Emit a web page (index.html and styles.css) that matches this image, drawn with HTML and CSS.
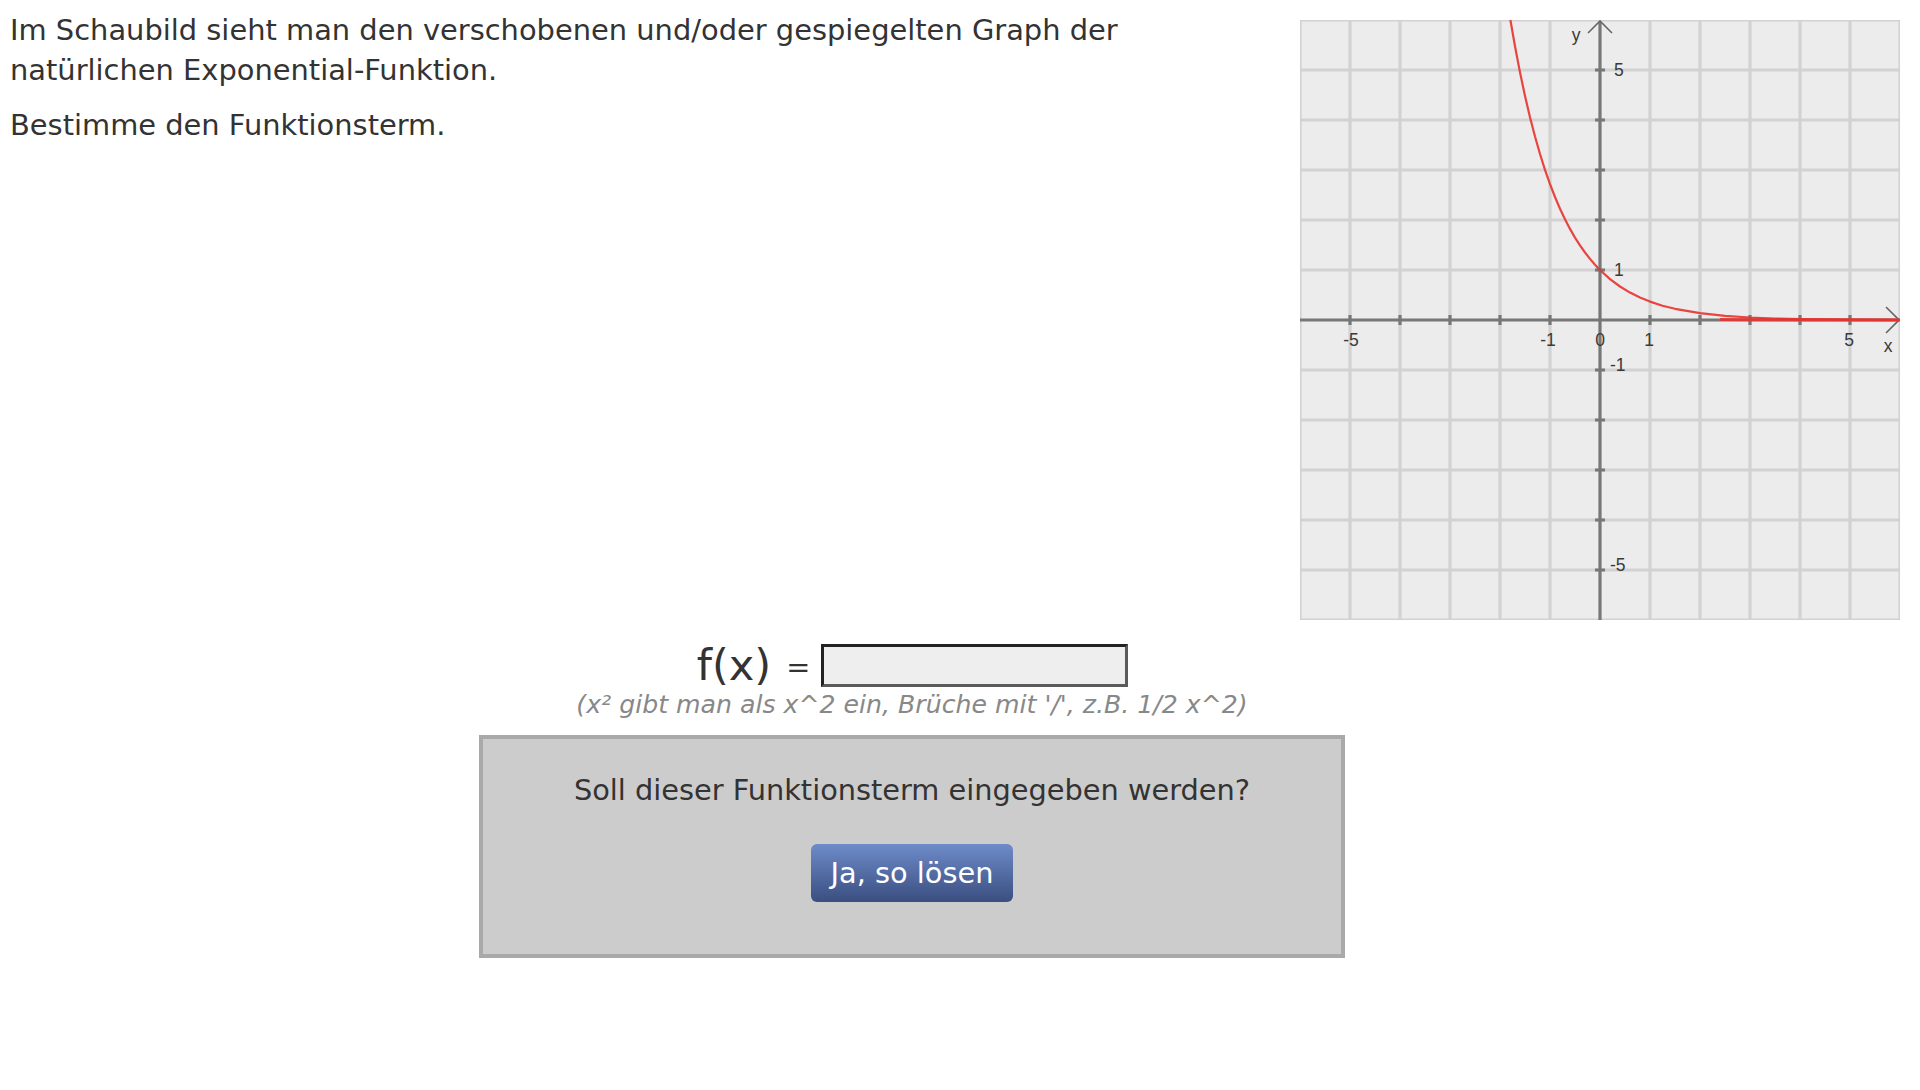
FILE: index.html
```html
<!DOCTYPE html>
<html lang="de">
<head>
<meta charset="utf-8">
<title>Exponential-Funktion</title>
<link rel="stylesheet" href="styles.css">
</head>
<body>
<div class="top">
  <div class="task">
    <p>Im Schaubild sieht man den verschobenen und/oder gespiegelten Graph der natürlichen Exponential-Funktion.</p>
    <p>Bestimme den Funktionsterm.</p>
  </div>
  <svg class="graph" viewBox="0 0 600 600" xmlns="http://www.w3.org/2000/svg">
    <rect x="0" y="0" width="600" height="600" fill="#ececec"/>
    <g stroke="#d2d2d2" stroke-width="3.2">
      <path d="M0 0V600M50 0V600M100 0V600M150 0V600M200 0V600M250 0V600M350 0V600M400 0V600M450 0V600M500 0V600M550 0V600M600 0V600"/>
      <path d="M0 0H600M0 50H600M0 100H600M0 150H600M0 200H600M0 250H600M0 350H600M0 400H600M0 450H600M0 500H600M0 550H600M0 600H600"/>
    </g>
    <g stroke="#777" stroke-width="3.2">
      <path d="M0 300H598"/>
      <path d="M300 2V600"/>
      <path d="M50 295V305M100 295V305M150 295V305M200 295V305M250 295V305M350 295V305M400 295V305M450 295V305M500 295V305M550 295V305"/>
      <path d="M295 50H305M295 100H305M295 150H305M295 200H305M295 250H305M295 350H305M295 400H305M295 450H305M295 500H305M295 550H305"/>
    </g>
    <g fill="none" stroke="#666" stroke-width="1.6">
      <path d="M288 13L300 1L312 13"/>
      <path d="M586 287L599 300L586 313"/>
    </g>
    <path fill="none" stroke="#e8322e" stroke-opacity="0.9" stroke-width="2.2" stroke-linejoin="round"
      d="M210.4 0L215 26.3L220 52.4L225 75.9L230 97.2L235 116.5L240 134L245 149.8L250 164.1L255 177L260 188.7L265 199.3L270 208.9L275 217.6L280 225.4L285 232.5L290 238.9L295 244.7L300 250L310 259.1L320 266.5L330 272.6L340 277.5L350 281.6L362.5 285.7L375 288.8L400 293.2L425 295.9L450 297.5L475 298.5L500 299.1L550 299.7L600 299.9"/>
    <path fill="none" stroke="#e8322e" stroke-opacity="0.85" stroke-width="3" d="M420 299.5L600 300"/>
    <g fill="#3a3a3a" font-family="Liberation Sans, Arial, sans-serif" font-size="17.5">
      <text x="276" y="21" text-anchor="middle">y</text>
      <text x="314" y="56">5</text>
      <text x="314" y="256">1</text>
      <text x="310" y="351">-1</text>
      <text x="310" y="551">-5</text>
      <text x="51" y="326" text-anchor="middle">-5</text>
      <text x="248" y="326" text-anchor="middle">-1</text>
      <text x="300" y="326" text-anchor="middle">0</text>
      <text x="349" y="326" text-anchor="middle">1</text>
      <text x="549" y="326" text-anchor="middle">5</text>
      <text x="588" y="332" text-anchor="middle">x</text>
    </g>
  </svg>
</div>
<div class="answer">
  <div class="fx-row">
    <span class="label"><span class="fx">f(x)</span><span class="eq">=</span></span>
    <input class="term" type="text" aria-label="f(x)">
  </div>
  <div class="hint">(x² gibt man als x^2 ein, Brüche mit '/', z.B. 1/2 x^2)</div>
  <div class="confirm">
    <p class="question">Soll dieser Funktionsterm eingegeben werden?</p>
    <button class="solve" type="button">Ja, so lösen</button>
  </div>
</div>
</body>
</html>
```
FILE: styles.css
```css
body {
  margin: 8px;
  font-family: "DejaVu Sans", Verdana, sans-serif;
  color: #333;
  background: #fff;
}

.top {
  display: flex;
  justify-content: space-between;
  align-items: flex-start;
}

.task {
  width: 1150px;
  font-size: 28.9px;
  line-height: 40px;
  padding-top: 2px;
  padding-left: 2px;
}

.task p {
  margin: 0 0 15px;
}

.graph {
  display: block;
  width: 600px;
  height: 600px;
  margin-top: 12px;
  margin-right: 12px;
}

.answer {
  width: 1808px;
  display: flex;
  flex-direction: column;
  align-items: center;
}

.fx-row {
  display: flex;
  align-items: flex-end;
  margin-top: 24px;
}

.label {
  font-size: 43.2px;
  line-height: 43.2px;
  color: #333;
}

.fx {
  margin-left: 1px;
}

.eq {
  position: relative;
  top: -3px;
  font-size: 28.8px;
  line-height: 1;
  margin-left: 15px;
  margin-right: 11px;
}

.term {
  box-sizing: border-box;
  width: 307px;
  height: 43px;
  margin: 0;
  padding: 0 6px;
  background: #eeeeee;
  border-style: solid;
  border-width: 3px;
  border-color: #222 #5a5a5a #5a5a5a #222;
  font-family: "DejaVu Sans", Verdana, sans-serif;
  font-size: 24px;
}

.hint {
  margin-top: 3px;
  font-size: 25.2px;
  line-height: 30px;
  font-style: italic;
  color: #888;
}

.confirm {
  box-sizing: border-box;
  width: 866px;
  margin-top: 15px;
  padding: 31px 0 52px;
  background: #cccccc;
  border: 4px solid #a9a9a9;
  display: flex;
  flex-direction: column;
  align-items: center;
}

.question {
  margin: 0;
  font-size: 28.8px;
  line-height: 40px;
  color: #333;
}

.solve {
  margin-top: 34px;
  width: 202px;
  height: 58px;
  padding: 0;
  border: none;
  border-radius: 6px;
  background: linear-gradient(#6e8bc9, #3a4e80);
  color: #fff;
  font-family: "DejaVu Sans", Verdana, sans-serif;
  font-size: 28.8px;
  line-height: 58px;
}
```
